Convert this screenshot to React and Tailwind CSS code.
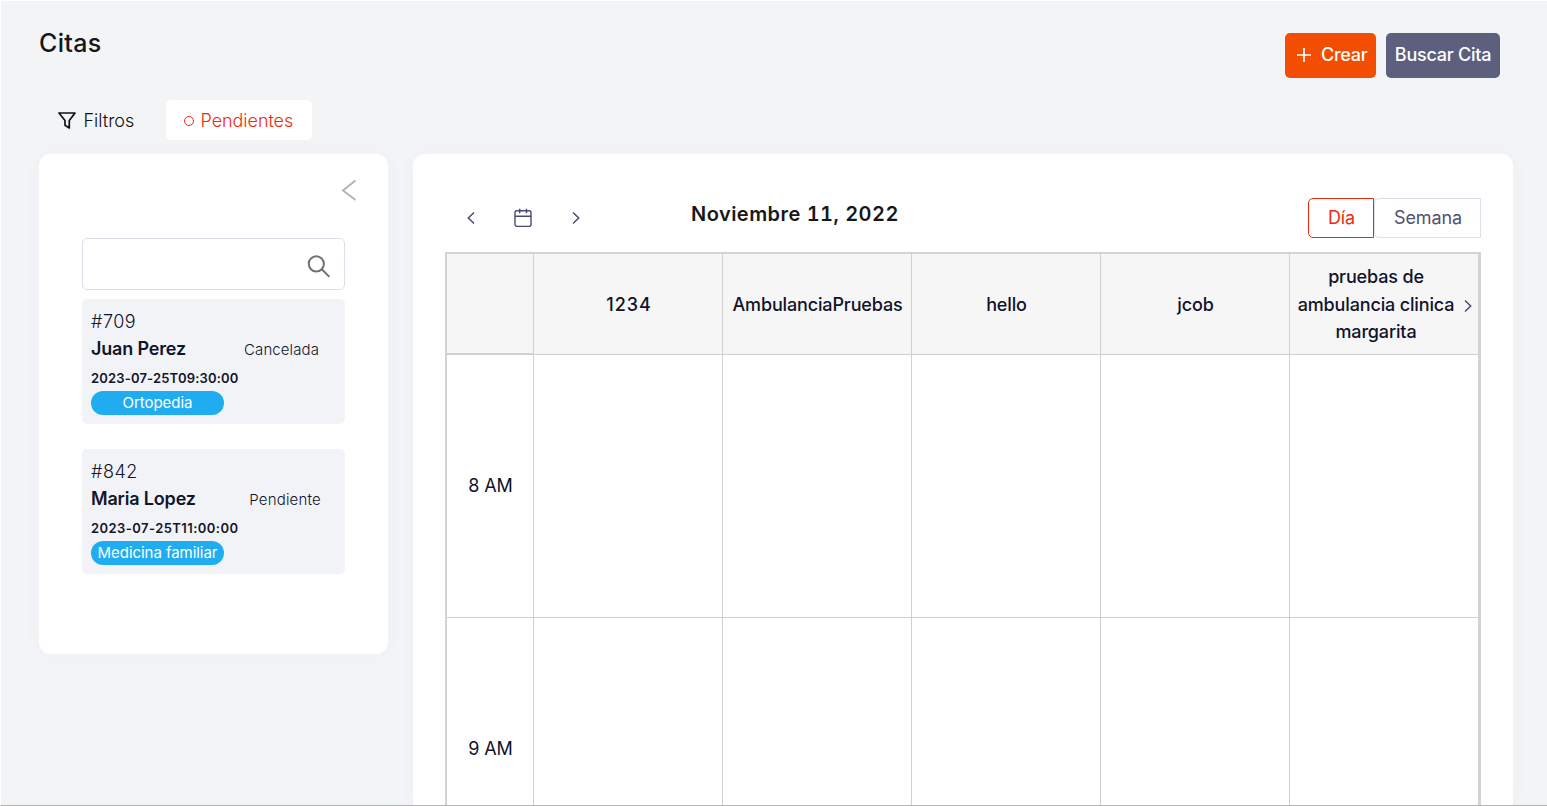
const columns = ["1234", "AmbulanciaPruebas", "hello", "jcob"];
const hours = ["8 AM", "9 AM"];

const appointments = [
  {
    id: "#709",
    name: "Juan Perez",
    status: "Cancelada",
    date: "2023-07-25T09:30:00",
    specialty: "Ortopedia",
    statusPad: "pr-[26px]",
    statusTracking: "tracking-[0.1px]",
    dateTracking: "tracking-[0.17px]",
  },
  {
    id: "#842",
    name: "Maria Lopez",
    status: "Pendiente",
    date: "2023-07-25T11:00:00",
    specialty: "Medicina familiar",
    statusPad: "pr-[24px]",
    statusTracking: "tracking-[0.2px]",
    dateTracking: "tracking-[0.44px]",
  },
];

function Chevron({ left, className }) {
  return (
    <svg viewBox="0 0 8 14" className={className} fill="none" stroke="currentColor" strokeWidth="1.5">
      <path d={left ? "M7 1.5 1.3 7 7 12.5" : "M1 1.5 6.7 7 1 12.5"} />
    </svg>
  );
}

function AppointmentCard({ item }) {
  return (
    <article className="flex h-[125px] w-[263px] flex-col rounded-[5px] bg-[#f2f3f7] pl-[9px] pt-[9px] text-[#12152b]">
      <div className="h-[27px] text-[18px] font-light leading-[27px] tracking-[0.5px]">{item.id}</div>
      <div className={`flex h-[27px] items-center justify-between ${item.statusPad}`}>
        <span className="text-[18px] font-semibold tracking-[-0.17px]">{item.name}</span>
        <span className={`pt-[4px] text-[15px] font-light ${item.statusTracking}`}>{item.status}</span>
      </div>
      <div className={`mt-[6px] h-[20px] text-[13px] font-semibold leading-[20px] ${item.dateTracking}`}>{item.date}</div>
      <div className="mt-[3px] h-6 w-[133px] rounded-full bg-[#20adf0] text-center text-[15px] leading-6 tracking-[-0.05px] text-white">
        {item.specialty}
      </div>
    </article>
  );
}

function Sidebar() {
  return (
    <aside className="h-[500px] w-[349px] rounded-xl bg-white pl-[43px] pt-[25px] shadow-[0_0_20px_rgba(100,110,140,0.03)]">
      <div className="flex h-[22px] justify-end pr-[31px]">
        <svg viewBox="0 0 16 22" className="h-[22px] w-4 text-[#b5b5b5]" fill="none" stroke="currentColor" strokeWidth="2">
          <path d="M14.5 1.5 2 11.5 14.5 21" />
        </svg>
      </div>
      <div className="mt-[37px] flex h-[52px] w-[263px] items-start justify-end rounded-[5px] border border-[#dddeea] pr-[13px] pt-[15px]">
        <svg viewBox="0 0 24 24" className="h-6 w-6 text-[#727272]" fill="none" stroke="currentColor" strokeWidth="2">
          <circle cx="9.3" cy="9.8" r="7.6" />
          <path d="m14.8 15.3 7.6 7.6" />
        </svg>
      </div>
      <div className="mt-[9px] flex flex-col gap-[25px]">
        {appointments.map((item) => (
          <AppointmentCard key={item.id} item={item} />
        ))}
      </div>
    </aside>
  );
}

function CalendarHeader() {
  return (
    <div className="flex h-[54px] items-start pr-[32px]">
      <div className="flex h-[40px] w-[246px] items-center pl-[22px] text-[#484a72]">
        <Chevron left className="h-[14px] w-2" />
        <svg viewBox="0 0 18 20" className="ml-[39px] h-5 w-[18px]" fill="none" stroke="currentColor" strokeWidth="1.4">
          <rect x="1" y="2.8" width="16" height="15.6" rx="1.8" />
          <path d="M1 8.3h16M5.7 .7v4.5M12.5 .7v4.5" />
        </svg>
        <Chevron className="ml-[40px] h-[14px] w-2" />
      </div>
      <div className="h-8 flex-1 text-[20px] font-semibold tabular-nums leading-8 tracking-[0.47px] text-[#171717]">Noviembre 11, 2022</div>
      <div className="flex h-10 text-[18px]">
        <div className="w-[66px] rounded-l-[5px] border border-[#ef2a0c] pl-px text-center leading-[38px] tracking-[-0.1px] text-[#ef2a0c]">Día</div>
        <div className="w-[107px] rounded-l-[5px] border border-[#dddeea] pl-px text-center leading-[38px] tracking-[-0.1px] text-[#50516f]">Semana</div>
      </div>
    </div>
  );
}

function Calendar() {
  return (
    <main className="h-[652px] w-[1100px] rounded-t-xl bg-white pl-[32px] pt-[44px] shadow-[0_0_20px_rgba(100,110,140,0.03)]">
      <CalendarHeader />
      <div className="grid h-[554px] w-[1036px] grid-cols-[87px_189px_189px_189px_189px_188px] grid-rows-[101px_263px_263px] overflow-hidden border-l-2 border-r-[3px] border-t-2 border-[#d3d3d3] text-[18px] text-[#10132a]">
        <div className="border-b-2 border-r border-[#d0d0d0] bg-[#f6f6f6]" />
        {columns.map((name) => (
          <div key={name} className="flex items-center justify-center border-b border-r border-[#d0d0d0] bg-[#f6f6f6] pl-px font-medium">
            <span className={name === "1234" ? "pl-px tracking-[1px]" : "tracking-[-0.15px]"}>{name}</span>
          </div>
        ))}
        <div className="flex items-center border-b border-[#d0d0d0] bg-[#f6f6f6] pl-[6px] font-medium">
          <span className="w-[160px] pt-px text-center leading-[27.5px] tracking-[-0.15px]">pruebas de ambulancia clinica margarita</span>
          <Chevron className="ml-[8px] mt-[3px] h-[14px] w-2 text-[#484a72]" />
        </div>
        {hours.map((hour) => (
          <div key={hour} className="contents">
            <div className="flex items-center justify-center border-b border-r border-[#d0d0d0] pb-[2px] pl-px tracking-[-0.15px]">{hour}</div>
            {columns.map((name) => (
              <div key={name} className="border-b border-r border-[#d0d0d0]" />
            ))}
            <div className="border-b border-[#d0d0d0]" />
          </div>
        ))}
      </div>
    </main>
  );
}

export default function App() {
  return (
    <div className="flex h-[806px] w-[1547px] flex-col overflow-hidden border-b border-l border-t border-b-[#b0b5ba] border-l-white border-t-white bg-[#f3f4f6] font-['Inter',sans-serif]">
      <header className="flex h-[99px] shrink-0 justify-between pl-[38px] pr-[47px]">
        <h1 className="mt-[24px] h-9 text-[25px] font-medium leading-9 tracking-[0.3px] text-[#171717]">Citas</h1>
        <div className="mt-8 flex h-[45px] gap-[10px] text-[18px] font-[450] tracking-[-0.25px] text-white">
          <button className="flex w-[91px] items-center rounded-[5px] bg-[#f24d00] pb-[2px] pl-[12px]">
            <svg viewBox="0 0 14 14" className="h-[14px] w-[14px]" fill="none" stroke="currentColor" strokeWidth="1.7">
              <path d="M7 0v14M0 7h14" />
            </svg>
            <span className="ml-[10px]">Crear</span>
          </button>
          <button className="w-[114px] rounded-[5px] bg-[#5c5f7e] pb-[2px] text-center">Buscar Cita</button>
        </div>
      </header>
      <nav className="flex h-10 shrink-0 pl-[57px] text-[18px] font-light leading-10">
        <div className="flex w-[108px] items-center text-[#101010]">
          <svg viewBox="0 0 18 17" className="mt-px h-[17px] w-[18px]" fill="none" stroke="currentColor" strokeWidth="1.7" strokeLinejoin="round">
            <path d="M1 1h16L11.3 8.5V16L7 13.3V8.5Z" />
          </svg>
          <span className="ml-[7.5px] pt-[2px]">Filtros</span>
        </div>
        <div className="flex w-[146px] items-center rounded-[5px] bg-white pl-[18px] text-[#ef2a0c]">
          <span className="mt-px h-[10px] w-[10px] rounded-full border border-current" />
          <span className="ml-[6.5px] pt-[2px] tracking-[-0.05px]">Pendientes</span>
        </div>
      </nav>
      <div className="mt-[14px] flex items-start gap-[25px] pl-[38px]">
        <Sidebar />
        <Calendar />
      </div>
    </div>
  );
}
